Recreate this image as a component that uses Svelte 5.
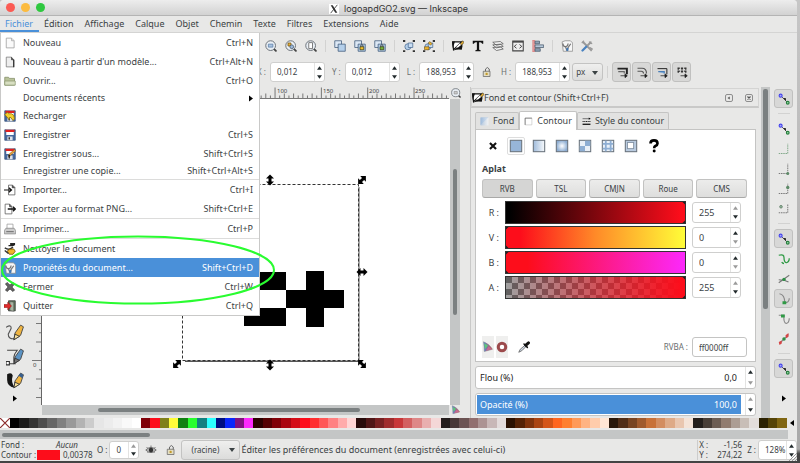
<script>
  const menus = ['Fichier', 'Édition', 'Affichage', 'Calque', 'Objet', 'Chemin', 'Texte', 'Filtres', 'Extensions', 'Aide'];

  const fileMenu = [
    { icon: 'new', label: 'Nouveau', key: 'Ctrl+N' },
    { icon: 'template', label: "Nouveau à partir d'un modèle...", key: 'Ctrl+Alt+N' },
    { icon: 'open', label: 'Ouvrir...', key: 'Ctrl+O' },
    { label: 'Documents récents', sub: true },
    { icon: 'revert', label: 'Recharger' },
    { icon: 'save', label: 'Enregistrer', key: 'Ctrl+S' },
    { icon: 'saveas', label: 'Enregistrer sous...', key: 'Shift+Ctrl+S' },
    { label: 'Enregistrer une copie...', key: 'Shift+Ctrl+Alt+S' },
    { sep: true },
    { icon: 'import', label: 'Importer...', key: 'Ctrl+I' },
    { icon: 'export', label: 'Exporter au format PNG...', key: 'Shift+Ctrl+E' },
    { sep: true },
    { icon: 'print', label: 'Imprimer...', key: 'Ctrl+P' },
    { sep: true },
    { icon: 'clean', label: 'Nettoyer le document' },
    { icon: 'docprops', label: 'Propriétés du document...', key: 'Shift+Ctrl+D', active: true },
    { icon: 'close', label: 'Fermer', key: 'Ctrl+W' },
    { icon: 'quit', label: 'Quitter', key: 'Ctrl+Q' }
  ];

  const commands = ['zoomsel', 'zoomdraw', 'zoompage', '', 'dup', 'clone', 'unclone', '', 'group', 'ungroup', '', 'fill', 'text', 'layers', 'xml', 'align', '', 'docprops', 'prefs'];
  const coords = [
    { l: 'X :', v: '0,012' },
    { l: 'Y :', v: '0,012' },
    { l: 'L :', v: '188,953', lock: true },
    { l: 'H :', v: '188,953' }
  ];
  const affects = ['aff1', 'aff2', 'aff3', 'aff4'];
  const snaps = ['snap*', '', 'snap', 'sbox', 'sedge', 'scorner', 'smid', '', 'snap*', 'spath', 'scross', 'scusp*', 'ssmooth', 'sline', '', 'snap*'];
  const paints = ['none', 'flat*', 'linear', 'radial', 'mesh', 'pattern', 'swatch', 'unknown'];
  const modes = ['RVB', 'TSL', 'CMJN', 'Roue', 'CMS'];
  const channels = [
    { l: 'R :', v: 255, c: 'red' },
    { l: 'V :', v: 0, c: 'green' },
    { l: 'B :', v: 0, c: 'blue' },
    { l: 'A :', v: 255, c: 'alpha' }
  ];
  const palette = ('000 1a1a1a 333 4d4d4d 666 808080 999 b3b3b3 ccc e6e6e6 ececec f2f2f2 f9f9f9 fff ' +
    '800008 fd0d1b 80801a fffd38 118012 29fd2f 138080 2dffff 000e80 0a26fb 801180 fc28fc ' +
    '2b0000 550003 800008 aa0510 d40c17 fd0d1b ff2f30 ff5757 ff8182 ffabab ffd5d5 ' +
    '280b0b 501617 782122 a02c2d c83739 d35f60 de8787 e9afaf f4d7d7 ' +
    '241c1c 483737 6c5353 916f6f ac9393 c8b7b7 e3dbdb ' +
    '2b1102 552206 80330c aa4412 d45519 ff6620 ff7f2f ff9957 ffb382 ffccab ffe6d5 ' +
    '28170b 502d17 784422 a05a2d c87138 d38d60 deaa87 e9c6af f4e3d7 ' +
    '241f1c 483e37 6c5d53 917c6f ac9d93 c8beb7 e3dedb 2b2202 554408 806612').split(' ');

  const hTicks = Array.from({ length: 88 }, (_, i) => ({ x: 43.400 + i * 4.633, n: i }));
  const hLabels = [['100', 275], ['150', 321], ['200', 367], ['250', 413]];
  const vTicks = Array.from({ length: 33 }, (_, i) => ({ y: 360.5 - (i - 4) * 9.25, n: i - 4 }));
  const handles = [[270, 180, 90], [362, 180, -45], [362, 272, 0], [270, 365, 90], [362, 364, 45], [177, 364, -45]];
</script>

{#snippet icon(name)}
  <svg class="ic" viewBox="0 0 16 16" aria-hidden="true">
    {#if name === 'new'}
      <path d="M3 1.5h7l3.500 3.500v9.500H3z" fill="#fafafa" stroke="#999" /><path d="M10 1.500v3.500h3.500" fill="#ddd" stroke="#aaa" />
    {:else if name === 'template'}
      <path d="M3 1.500h7l3 3.500v9.500H3z" fill="#eee" stroke="#777" /><path d="M10 1.500v3.500h3" fill="#444" stroke="#444" /><path d="M13 5v10" stroke="#222" stroke-width="1.500" />
    {:else if name === 'open'}
      <path d="M1 3h5l1 1.500h7v9H1z" fill="#b9c39a" stroke="#7f8a63" /><path d="M1 8h14v5.500H1z" fill="#d8dfc2" stroke="#8e9974" />
    {:else if name === 'save' || name === 'saveas' || name === 'revert'}
      <path d="M1 1h14v14H1z" fill="#47699f" stroke="#36507c" /><path d="M3 1h10v7H3z" fill="#fff" /><path d="M2 1h12v3H2z" fill="#e02020" /><path d="M4.500 10h7v5h-7z" fill="#dde2ea" /><path d="M6 11h2v3H6z" fill="#333" />
      {#if name === 'saveas'}<path d="M6 11l1-3 7-6 1.500 2-7 6z" fill="#e6a33e" stroke="#7a4d12" stroke-width=".7" /><path d="M6 11l2-1" stroke="#111" stroke-width="2" />{/if}
      {#if name === 'revert'}<path d="M1 6l4-3 1 2h4q4 1 4 7l-2 2-3-4H7v3z" fill="#f2cf2e" stroke="#8c6d08" />{/if}
    {:else if name === 'import'}
      <path d="M6 1.500h5.500l3 3v10H6z" fill="#fff" stroke="#555" /><path d="M11 1.500v3.500h3.500" fill="#333" stroke="#444" /><path d="M0 8h9M6.500 5l3.500 3-3.500 3" fill="none" stroke="#111" stroke-width="1.600" />
    {:else if name === 'export'}
      <path d="M1.500 1.500h6l3 3v10h-9z" fill="#fff" stroke="#555" /><path d="M7.500 1.500v3.500h3" fill="#555" stroke="#444" /><path d="M5 8h9M12 5l3 3-3 3" fill="none" stroke="#111" stroke-width="1.800" />
    {:else if name === 'print'}
      <path d="M4 1.500h8V8H4z" fill="#fff" stroke="#999" /><path d="M2.500 7h11l2 3v4.500h-15V10z" fill="#ccc" stroke="#888" /><path d="M3 11.500h10" stroke="#777" stroke-width="1.500" />
    {:else if name === 'clean'}
      <path d="M9 0h5v2h-5zM6 3.500h5l3-1" fill="#333" stroke="#222" stroke-width="1.500" /><path d="M1 6.500q5 3 8 1l3-2" fill="none" stroke="#333" stroke-width="2" /><path d="M4 11q3-4 9-3l2 3-3 4H7z" fill="#f0b429" stroke="#6b4a04" /><path d="M1 10l5 4" stroke="#333" stroke-width="2" />
    {:else if name === 'docprops'}
      <path d="M1.500 2.500l4-1.500h7l3 3v11H3z" fill="#f7f7f7" stroke="#888" /><path d="M2.500 4.500q0 4 3.500 4.500l2 5.500M9.500 4.500q0 3-3 4.500M13 5l-3.500 5-1 4" fill="none" stroke="#777" stroke-width="1.700" /><path d="M8.500 10.500v4" stroke="#3d78b8" stroke-width="2.500" />
    {:else if name === 'close'}
      <path d="M2 4l2-2 4 3.500L12 2l2 2-3.500 4 3.500 4-2 2-4-3.500L4 14l-2-2 3.500-4z" fill="#666" stroke="#333" />
    {:else if name === 'quit'}
      <path d="M6 1h9v13.500H6z" fill="#617c5f" stroke="#333" /><path d="M8 2l5 1v12l-5-1z" fill="#a8b5a3" stroke="#444" stroke-width=".6" /><path d="M0 6h5V3l5 5-5 5v-3H0z" fill="#e02a2a" stroke="#8d0b0b" stroke-width=".7" />
    {:else if name === 'zoomsel' || name === 'zoomdraw' || name === 'zoompage' || name === 'zoom'}
      <path d="M11.500 11.500l3 3" stroke="#444" stroke-width="2.500" stroke-linecap="round" /><circle cx="7.500" cy="7.500" r="6.500" fill="#e9eff5" stroke="#6b7178" stroke-width="1.300" />
      {#if name === 'zoomsel'}<path d="M4.500 5.500h6v4h-6z" fill="#a9c3e0" stroke="#5b7ea8" />{/if}
      {#if name === 'zoomdraw'}<path d="M4 4h4v4H4z" fill="#e8b33c" stroke="#735413" /><circle cx="9" cy="9" r="2.500" fill="#9bb8dc" stroke="#456" />{/if}
      {#if name === 'zoompage'}<path d="M5 3.500h5v8H5z" fill="#fff" stroke="#555" />{/if}
      {#if name === 'zoom'}<path d="M5 5.500h5v4H5z" fill="#ccc" stroke="#888" />{/if}
    {:else if name === 'dup' || name === 'clone' || name === 'unclone'}
      <path d="M1 1h9v9H1z" fill="#dce8f5" stroke="#3d5878" /><path d="M5.500 5.500h9.500V15H5.500z" fill="#b4cfea" stroke="#3d5878" />
      {#if name !== 'dup'}<path d="M8 9h5v4H8z" fill={name === 'clone' ? '#f2c02f' : '#75b53c'} stroke="#3b3b10" /><path d="M9 9V7q1.500-1.500 3 0v2" fill="none" stroke="#333" />{/if}
    {:else if name === 'group' || name === 'ungroup'}
      <circle cx="6.500" cy="9" r="4" fill="#b4cfea" stroke="#4b6b92" /><path d="M7 4h6v6H7z" fill="#c9ddf2" stroke="#4b6b92" />
      <path d="M0 0h3v2.500H0zM13 0h3v2.500h-3zM0 13.500h3V16H0zM13 13.500h3V16h-3z" fill="#333" />
      {#if name === 'ungroup'}<path d="M2 9h6v4H2zM9 2l3 3-2 2-3-3z" fill="#eeb52e" stroke="#5f4308" stroke-width=".7" />{/if}
    {:else if name === 'fill'}
      <path d="M1 2.500h12L2 13z" fill="#fff" stroke="#111" stroke-width="1.600" /><path d="M0 2h4L1 11z" fill="#111" /><path d="M14 8l-1 5q-6-1-11 1l7-6 4-3z" fill="#111" /><path d="M5 10l6-6 2 2-5 4z" fill="#fff" /><path d="M11 5l3-4 2 2-3 4z" fill="#e8b132" stroke="#222" stroke-width=".8" />
    {:else if name === 'text'}
      <path d="M1 1h14v4h-1.500Q13 3 11 3H9.500v9.500q0 1 2 1.200V15h-7v-1.300q2-.2 2-1.200V3H5Q3 3 2.500 5H1z" fill="#111" />
    {:else if name === 'layers'}
      <path d="M1 10l10-1 4 3-9 2zM1 6.500l10-1 4 3-9 2zM1 3l10-1 4 3-9 2z" fill="#f4f4f4" stroke="#555" />
    {:else if name === 'xml'}
      <path d="M1 1.500h14v13H1z" fill="#eee" stroke="#444" stroke-width="1.400" /><path d="M1 2.500h14" stroke="#444" stroke-width="2" /><path d="M6 6L3 8.500 6 11M10 6l3 2.500L10 11" fill="none" stroke="#333" stroke-width="1.200" />
    {:else if name === 'align'}
      <path d="M1 0h2.500v16H1z" fill="#e7a1a1" stroke="#c55" stroke-width=".6" /><path d="M4 1.500h6v3.500H4zM4 11.500h7v3.500H4z" fill="#8fa2b5" stroke="#48596b" /><path d="M4 6.500h11.500v3.500H4z" fill="#b6c7d8" stroke="#48596b" />
    {:else if name === 'prefs'}
      <path d="M3 3l10 10M13 3L9 7" stroke="#999" stroke-width="2.500" stroke-linecap="round" /><path d="M7 9l-5 5" stroke="#4a83c0" stroke-width="3" stroke-linecap="round" /><path d="M1 4l3-3M12 10l3 2-2 3M11 2l1 2 3 1" fill="none" stroke="#999" stroke-width="1.500" />
    {:else if name === 'lock'}
      <path d="M3 7h9v7H3z" fill="#e3ddc2" stroke="#666" /><path d="M6 7V4q2.500-4 5 0v3" fill="none" stroke="#666" stroke-width="1.300" /><circle cx="7.500" cy="10.500" r="1.600" fill="#c39b2c" />
    {:else if name === 'eye'}
      <path d="M1 8q7-7 14 0-7 7-14 0z" fill="#bbb" stroke="#555" /><circle cx="8" cy="8" r="3" fill="#333" /><path d="M2 4l2 2M8 2v2M14 4l-2 2M3 12l1-1M13 12l-1-1" stroke="#555" />
    {:else if name.startsWith('aff')}
      {#if name === 'aff4'}
        <path d="M2 3h13M2 7h13M3 2v7M8 2v7M13 2v7" stroke="#333" stroke-width="1.800" stroke-dasharray="3 1.500" />
      {:else if name === 'aff2'}
        <path d="M2 3h6q6 0 6 7M2 7h5q3 0 3 3" fill="none" stroke="#555" stroke-width="1.500" />
      {:else}
        <path d="M2 3.500h12.500V11" fill="none" stroke="#222" stroke-width={name === 'aff1' ? 2.600 : 1.300} /><path d="M3 7.500h8V10" fill={name === 'aff3' ? '#8ab4e0' : 'none'} stroke={name === 'aff3' ? '#4a7fb8' : '#666'} stroke-width="1.500" />
      {/if}
      <path d="M6 13h7M12 10.500l3 2.500-3 2.500z" stroke="#222" fill="#222" />
    {:else if name === 'snap'}
      <path d="M4 4l8.500 8.500" stroke="#333" stroke-width="1" /><circle cx="3.500" cy="3.500" r="2" fill="#a8a8f8" stroke="#4444ee" stroke-width="1.500" /><circle cx="13" cy="13" r="1.800" fill="#9fd6ad" stroke="#25803c" stroke-width="1.500" /><path d="M7 6.500l3.500.5v3.500z" fill="#111" />
    {:else if name === 'sbox' || name === 'sedge' || name === 'scorner'}
      <path d="M1 14h12V1" fill="none" stroke={name === 'sbox' ? '#7fa888' : '#777'} stroke-width="1.300" stroke-dasharray="2 1" />
      {#if name === 'sedge'}<circle cx="13" cy="14" r="2" fill="#5d8a68" />{/if}
      {#if name === 'scorner'}<circle cx="13" cy="6" r="2.200" fill="#5d8a68" />{/if}
    {:else if name === 'smid'}
      <circle cx="4" cy="5" r="1.800" fill="#8fb599" stroke="#5d7a64" /><path d="M13 2v11H1" fill="none" stroke="#777" stroke-width="1.300" stroke-dasharray="2 1" />
    {:else if name === 'spath'}
      <path d="M1 3q7-2 7 3 0 6 3 7 4-1 4-6M8 14q-2 0-3-2" fill="none" stroke="#2f9a45" stroke-width="1.700" />
    {:else if name === 'scross'}
      <path d="M1 13L15 3M1 9q8 0 13 3" fill="none" stroke="#777" stroke-width="1.400" /><circle cx="8" cy="8.500" r="2.300" fill="#2f8f45" />
    {:else if name === 'scusp'}
      <path d="M2 1q7 1 7 12M9 13q6 0 6-6" fill="none" stroke="#888" stroke-width="1.500" /><path d="M6 11h5v4H6z" fill="#2f9a45" />
    {:else if name === 'ssmooth'}
      <path d="M1 3h7q-1 10 3 11 4-1 4-7" fill="none" stroke="#888" stroke-width="1.500" /><path d="M4 2h5v4H4z" fill="#2f9a45" />
    {:else if name === 'sline'}
      <path d="M2 14L14 2" stroke="#888" stroke-width="1.500" /><path d="M1 12l4-2v4l-3 2zM10 3l4-3v5l-3 2z" fill="#d64545" /><circle cx="8" cy="8" r="2.300" fill="#2f8f45" />
    {:else if name === 'none'}
      <path d="M4.500 4.500l7 7M11.500 4.500l-7 7" stroke="#111" stroke-width="2.400" />
    {:else if name === 'unknown'}
      <path d="M4 5q0-3.500 4-3.500T12 5q0 2-2.500 3Q8.200 8.600 8.200 10.500" fill="none" stroke="#000" stroke-width="3" /><circle cx="8.200" cy="13.800" r="1.700" />
    {:else if name === 'flat' || name === 'linear' || name === 'radial' || name === 'mesh' || name === 'pattern' || name === 'swatch'}
      <rect x="1.500" y="1.500" width="13" height="13" fill={{ flat: '#97b5d8', linear: 'url(#lin)', radial: 'url(#rad)', mesh: '#e9f0f8', pattern: '#e9f0f8', swatch: '#b9cbe0' }[name]} stroke="#69737d" stroke-width="1.200" />
      {#if name === 'mesh'}<path d="M8 2h6v6H8zM2 8h6v6H2z" fill="#8eaed3" />{/if}
      {#if name === 'pattern'}<path d="M2 5.500h12M2 11h12M5.500 2v12M11 2v12" stroke="#8eaed3" stroke-width="2" />{/if}
      {#if name === 'swatch'}<rect x="4" y="4" width="7" height="7" fill="#fff" stroke="#8392a3" />{/if}
    {:else if name === 'tabfill'}
      <path d="M1 1h14L1 14z" fill="#9fbbdb" /><path d="M1 1h14v14H1z" fill="url(#lin)" opacity=".7" />
    {:else if name === 'tabstroke'}
      <path d="M2 2h12v12H2z" fill="#fff" stroke="#bbb" /><path d="M2 14V2h12" fill="none" stroke="#444" />
    {:else if name === 'tabstyle'}
      <path d="M1 3h14" stroke="#222" stroke-width="1" /><path d="M1 8h14" stroke="#222" stroke-width="2" stroke-dasharray="2 1" /><path d="M1 13h14" stroke="#222" stroke-width="2.500" /><path d="M12 1l3 2-3 2z" />
    {:else if name === 'managed'}
      <path d="M2 1q1 7 1 13l11-3Q10 4 2 1z" fill="url(#tri)" stroke="#888" stroke-width=".7" /><path d="M3 3l5 3-4 5z" fill="#5fc97a" /><path d="M9 7l4 4-8 2z" fill="#c66a8d" />
    {:else if name === 'gamut'}
      <circle cx="8" cy="8" r="5" fill="#fff" stroke="#9c4a4c" stroke-width="4" />
    {:else if name === 'picker'}
      <path d="M1 15l2-4 6-5 1.500 1.500L5 13z" fill="#cfdae5" stroke="#555" /><path d="M8 4l4.500 4.500" stroke="#111" stroke-width="2" stroke-linecap="round" /><path d="M10.500 5.500L14 2.500" stroke="#111" stroke-width="4" stroke-linecap="round" />
    {:else if name === 'pencil' || name === 'pen' || name === 'calli'}
      {#if name === 'pencil'}<path d="M0 3q5-3 4.500 1L2 9q0 5 6 4" fill="none" stroke="#555" />{/if}
      {#if name === 'pen'}<path d="M1 2h9Q5 8 8 14H2" fill="none" stroke="#444" /><path d="M0 12h3v3H0z" fill="#fff" stroke="#333" />{/if}
      {#if name === 'calli'}<path d="M1 2q4-2 5 1-2 6 2 11-7-1-7-7z" fill="#151515" />{/if}
      <path d="M7 14l1-6 5-7 2.500 1.500L13 10z" fill={name === 'pen' ? '#5b93c4' : '#efb440'} stroke="#444" stroke-width=".8" /><path d="M7 14l1-5 4 2z" fill={name === 'pen' ? '#777' : '#fbe39a'} stroke="#333" stroke-width=".8" />
      {#if name === 'calli'}<path d="M11 3l2-2 2.500 1.500-1 3z" fill="#385f8e" />{/if}
    {/if}
  </svg>
{/snippet}

{#snippet arrows(top, bottom)}
  <span class="arrows" aria-hidden="true">
    <svg viewBox="0 0 6 4" class:off={top}><path d="M0 4L3 0l3 4z" /></svg>
    <svg viewBox="0 0 6 4" class:off={bottom}><path d="M0 0l3 4 3-4z" /></svg>
  </span>
{/snippet}

<svg class="defs" aria-hidden="true">
  <defs>
    <linearGradient id="lin"><stop offset="0" stop-color="#9fbbdb" /><stop offset="1" stop-color="#f8fafc" /></linearGradient>
    <radialGradient id="rad"><stop offset="0" stop-color="#fff" /><stop offset="1" stop-color="#8eaed3" /></radialGradient>
    <linearGradient id="tri"><stop offset="0" stop-color="#4f86d9" /><stop offset="1" stop-color="#d34d4d" /></linearGradient>
  </defs>
</svg>

<div class="desktop">
  <div class="window">
    <header class="title">
      <div class="lights"><button aria-label="Fermer"></button><button aria-label="Réduire"></button><button aria-label="Agrandir"></button></div>
      <h1><svg class="x11" viewBox="0 0 12 12" aria-hidden="true"><path d="M0 0h12v12H0z" fill="#fff" /><path d="M2 1.500h2.500l5.500 9H7.500z" fill="#333" /><path d="M10 1L2 11" stroke="#333" /></svg>logoapdGO2.svg — Inkscape</h1>
    </header>

    <nav class="menubar">
      {#each menus as m, i}<button class:open={i === 0}>{m}</button>{/each}
    </nav>

    <div class="commands">
      {#each commands as c}
        {#if c}<button aria-label={c}>{@render icon(c)}</button>{:else}<i></i>{/if}
      {/each}
    </div>

    <div class="controls">
      {#each coords as c}
        <label><span>{c.l}</span><span class="spin"><input value={c.v} />{@render arrows(false, false)}</span></label>
        {#if c.lock}<button class="lock" aria-label="Verrouiller">{@render icon('lock')}</button>{/if}
      {/each}
      <span class="combo unit"><select aria-label="Unité"><option>px</option></select></span>
      <i></i>
      {#each affects as a}<button class="toggle" aria-label={a}>{@render icon(a)}</button>{/each}
    </div>

    <main>
      <aside class="toolbox">
        <button aria-label="Crayon">{@render icon('pencil')}</button>
        <button aria-label="Bézier">{@render icon('pen')}</button>
        <button aria-label="Calligraphie">{@render icon('calli')}</button>
        <svg class="more" viewBox="0 0 4 6"><path d="M0 0l4 3-4 3z" /></svg>
      </aside>

      <section class="work">
        <div class="rulerrow">
          <svg class="hruler">
            <g transform="translate(-32,-87)">
              {#each hTicks as t}<path d={`M${t.x} 98.500v${(t.n % 10 === 0) ? -11 : t.n % 2 ? -3 : -5}`} stroke="#777" />{/each}
              {#each hLabels as l}<text x={l[1] + 2} y="93">{l[0]}</text>{/each}
            </g>
          </svg>
          <span class="corner">{@render icon('zoom')}</span>
        </div>
        <div class="viewrow">
          <svg class="vruler">
            <g transform="translate(-32,-99)">
              {#each vTicks as t}<path d={`M42 ${t.y}h${t.n === 0 ? -10 : t.n % 2 ? -3 : -6}`} stroke="#777" />{/each}
              <text x="33" y="367">0</text>
              <path d="M41.500 99v306" stroke="#666" />
            </g>
          </svg>
          <svg class="canvas">
            <g transform="translate(-42,-99)">
              <path d="M358.500 187v174H185" fill="none" stroke="#555" stroke-width="2" />
              <rect x="182.500" y="184.500" width="176" height="176" fill="#fff" stroke="#333" stroke-dasharray="3 2" />
              <path d="M244 272h42v18h20v-19h18v19h20v18h-20v19h-18v-19h-20v18h-42v-18h42v-18h-42z" />
              {#each handles as h}
                <path d="M-5.500 0l4-4v2.500h3V-4l4 4-4 4V1.500h-3V4z" transform={`translate(${h[0]} ${h[1]}) rotate(${h[2]})`} />
              {/each}
            </g>
          </svg>
          <div class="vscroll"><b></b></div>
        </div>
        <div class="hrow"><div class="hscroll"><b></b></div><span class="corner">{@render icon('managed')}</span></div>
      </section>

      <section class="dock">
        <h2>{@render icon('fill')}<span>Fond et contour (Shift+Ctrl+F)</span><button aria-label="Iconifier"><svg viewBox="0 0 8 8"><path d="M5 2v4L2 4z" fill="#555" /></svg></button><button aria-label="Fermer le panneau"><svg viewBox="0 0 8 8"><path d="M2 2l4 4M6 2L2 6" stroke="#555" stroke-width="1.500" /></svg></button></h2>
        <div class="tabs" role="tablist">
          <button role="tab" aria-selected="false">{@render icon('tabfill')}Fond</button>
          <button role="tab" aria-selected="true" class="on">{@render icon('tabstroke')}Contour</button>
          <button role="tab" aria-selected="false">{@render icon('tabstyle')}Style du contour</button>
        </div>
        <div class="page">
          <div class="paints">
            {#each paints as p}<button aria-label={p.replace('*', '')} class:on={p.endsWith('*')}>{@render icon(p.replace('*', ''))}</button>{/each}
          </div>
          <h3>Aplat</h3>
          <div class="modes">{#each modes as m, i}<button class:on={i === 0}>{m}</button>{/each}</div>
          <div class="channels">
            {#each channels as c}
              <div class="channel">
                <label for={c.c}>{c.l}</label>
                <span class={'track ' + c.c} class:max={c.v === 255}><input id={c.c} type="range" min="0" max="255" value={c.v} /></span>
                <span class="spin"><input value={c.v} aria-label={c.l} />{@render arrows(c.v === 255, c.v === 0)}</span>
              </div>
            {/each}
          </div>
          <div class="rgba">
            <button class="shade" aria-label="Gestion des couleurs">{@render icon('managed')}</button>
            <button class="shade" aria-label="Hors gamut">{@render icon('gamut')}</button>
            <button class="pick" aria-label="Pipette">{@render icon('picker')}</button>
            <label>RVBA : <input value="ff0000ff" /></label>
          </div>
        </div>
        <label class="amount"><span>Flou (%)</span><input value="0,0" />{@render arrows(false, true)}</label>
        <label class="amount full"><span>Opacité (%)</span><input value="100,0" />{@render arrows(true, false)}</label>
      </section>
      <div class="dockscroll"><b></b></div>

      <aside class="snapbar">
        {#each snaps as s}
          {#if s}<button aria-label={s.replace('*', '')} class:on={s.endsWith('*')}>{@render icon(s.replace('*', ''))}</button>{:else}<i></i>{/if}
        {/each}
        <svg class="more" viewBox="0 0 4 6"><path d="M0 0l4 3-4 3z" /></svg>
      </aside>
    </main>

    <div class="palette">
      <svg class="nocolor" viewBox="0 0 10 10" aria-hidden="true"><path d="M0 0h10v10H0z" fill="#fff" /><path d="M0 0l10 10M10 0L0 10" stroke="#8c2c2c" stroke-width="1.200" /></svg>
      <div class="swatches">{#each palette as p}<span style:background={'#' + p}></span>{/each}</div>
      <svg class="back" viewBox="0 0 4 6"><path d="M4 0L0 3l4 3z" /></svg>
    </div>
    <div class="palscroll"><b></b></div>

    <footer>
      <div class="style">
        <span>Fond :</span><em>Aucun</em>
        <span>Contour :</span><span class="stroke"><b></b>0,00378</span>
      </div>
      <label class="op">O : <span class="spin"><input value="0" />{@render arrows(true, false)}</span></label>
      <button aria-label="Visibilité">{@render icon('eye')}</button>
      <button aria-label="Verrou">{@render icon('lock')}</button>
      <span class="combo layer"><select aria-label="Calque"><option>(racine)</option></select></span>
      <p>Éditer les préférences du document (enregistrées avec celui-ci)</p>
      <dl><dt>X :</dt><dd>-1,56</dd><dt>Y :</dt><dd>274,22</dd></dl>
      <label class="zoomf">Z : <span class="spin"><input value="128%" />{@render arrows(false, false)}</span></label>
      <svg class="grip" viewBox="0 0 8 8"><path d="M0 8l8-8M3 8l5-5M6 8l2-2" stroke="#999" /></svg>
    </footer>
  </div>

  <div class="filemenu" role="menu">
    {#each fileMenu as f}
      {#if f.sep}<hr />{:else}
        <button role="menuitem" class:active={f.active} class:plain={!f.icon}>
          <span class="slot">{#if f.icon}{@render icon(f.icon)}{/if}</span>
          <span class="name">{f.label}</span>
          {#if f.sub}<svg class="more" viewBox="0 0 4 6"><path d="M0 0l4 3-4 3z" /></svg>{:else}<span>{f.key ?? ''}</span>{/if}
        </button>
      {/if}
    {/each}
  </div>
  <svg class="ring" viewBox="0 0 274 70" aria-hidden="true"><ellipse cx="137" cy="35" rx="136" ry="33.500" fill="none" stroke="#29fc30" stroke-width="2" /></svg>
</div>

<style>
  :global(body) { margin: 0; }
  .desktop { position: relative; box-sizing: border-box; height: 100vh; padding: 0 3px 2px 0; overflow: hidden; background: linear-gradient(#c6c6c6, #a9a9a9 97%, #444 98%); font: 9px/12px "Noto Sans", "Open Sans", sans-serif; color: #3b4244; }
  .window { display: flex; flex-direction: column; height: 100%; background: #e8e8e7; border-radius: 4px 4px 0 0; overflow: hidden; }
  .defs { position: absolute; width: 0; height: 0; }
  button, input, select { font: inherit; color: inherit; margin: 0; padding: 0; border: 0; background: none; border-radius: 0; outline: 0; }
  button { display: flex; align-items: center; justify-content: center; white-space: nowrap; }
  input { min-width: 0; }
  .ic { width: 12px; height: 12px; flex: none; display: block; }
  .more { width: 4px; height: 7px; flex: none; }

  .title { position: relative; display: flex; align-items: center; justify-content: center; height: 15px; flex: none; border-bottom: 1px solid #b4b4b4; background: linear-gradient(#ededed, #d2d2d2); }
  .lights { position: absolute; left: 6px; display: flex; gap: 6px; }
  .lights button { width: 9px; height: 9px; border-radius: 50%; background: #fb5b54; }
  .lights button:nth-child(2) { background: #fcbb3f; }
  .lights button:nth-child(3) { background: #2fc840; }
  h1 { display: flex; align-items: center; gap: 5px; margin: 2px 0 0; font: 9px/14px Inter, Roboto, sans-serif; color: #333; }
  .x11 { width: 10px; height: 10px; }

  .menubar { display: flex; gap: 11px; height: 16px; flex: none; border-bottom: 1px solid #d4d4d3; }
  .menubar button { padding-top: 2px; border-bottom: 2px solid transparent; }
  .menubar .open { margin-right: -6px; padding: 2px 6px 0 5px; color: #4a90d9; border-color: #4a90d9; }

  .commands { display: flex; align-items: center; height: 26px; flex: none; padding-left: 261px; }
  .commands button { width: 20px; height: 20px; }
  i { flex: none; width: 1px; height: 12px; margin: 0 4px; background: #d2d2d1; }

  .controls { display: flex; align-items: center; height: 28px; flex: none; padding: 0 0 2px 257px; font-size: 8px; box-sizing: border-box; }
  .controls label { display: flex; align-items: center; gap: 4px; margin-right: 7px; color: #6a6f70; }
  .spin { display: flex; box-sizing: border-box; height: 20px; background: #fff; border: 1px solid #cfcfce; border-radius: 3px; overflow: hidden; color: #3b4244; }
  .controls .spin { width: 55px; }
  .spin input { flex: 1; width: 0; padding-left: 6px; }
  .arrows { display: flex; flex: none; flex-direction: column; justify-content: space-around; align-items: center; width: 9px; border-left: 1px solid #e3e3e2; }
  .arrows svg { width: 5px; height: 4px; fill: #222a2c; }
  .arrows .off { fill: #9a9a9a; }
  .lock { margin-right: 8px; }
  .combo { position: relative; display: flex; box-sizing: border-box; border: 1px solid #c3c3c2; border-radius: 3px; background: linear-gradient(#efefee, #dcdcdb); }
  .combo::after { content: ""; position: absolute; right: 4px; top: 7px; border: 3px solid transparent; border-top: 4px solid #3b4244; border-bottom: 0; }
  .combo select { appearance: none; width: 100%; }
  .unit { width: 31px; height: 18px; margin-left: -5px; }
  .unit select { padding-left: 3px; }
  .toggle { box-sizing: border-box; width: 19px; height: 20px; margin-right: 1px; border: 1px solid #c0c0bf; border-radius: 3px; background: #d8d8d7; }

  main { display: flex; flex: 1; min-height: 0; }
  .toolbox { display: flex; flex: none; flex-direction: column; justify-content: flex-end; align-items: center; gap: 4px; width: 26px; padding: 0 4px 16px 2px; }
  .toolbox .ic { width: 18px; height: 18px; }
  .toolbox button { height: 20px; }
  .work { display: flex; flex: 1; flex-direction: column; min-width: 0; padding-bottom: 3px; }
  .rulerrow { display: flex; height: 12px; flex: none; }
  .hruler { flex: 1; height: 12px; min-width: 0; border-bottom: 1px solid #777; box-sizing: border-box; }
  text { font-size: 6px; fill: #444; }
  .corner { display: flex; flex: none; align-items: center; justify-content: center; width: 13px; }
  .corner .ic { width: 10px; height: 10px; }
  .viewrow { display: flex; flex: 1; min-height: 0; }
  .vruler { width: 10px; height: 100%; flex: none; }
  .canvas { flex: 1; min-width: 0; height: 100%; background: #fff; }
  .vscroll { flex: none; width: 10px; margin-right: 2px; padding-top: 70px; box-sizing: border-box; background: #c4c6c6; }
  .vscroll b { display: block; width: 4px; height: 146px; margin: 0 auto; border-radius: 2px; background: #7b8081; }
  .hrow { display: flex; height: 10px; flex: none; padding-left: 10px; }
  .hscroll { display: flex; flex: 1; align-items: center; padding-left: 56px; background: #c4c6c6; }
  .hscroll b { width: 262px; height: 4px; border-radius: 2px; background: #7b8081; }

  .dock { display: flex; flex: none; flex-direction: column; width: 291px; margin-left: 8px; box-sizing: border-box; padding: 1px 5px 0 4px; border-left: 1px solid #c9c9c8; overflow: hidden; }
  h2 { display: flex; align-items: center; gap: 10px; height: 20px; flex: none; margin: 0 -3px 3px -4px; padding-right: 5px; box-sizing: border-box; border: 1px solid #d4d4d3; border-bottom: 2px solid #c9c9c8; font: inherit; }
  h2 span { flex: 1; margin-left: -10px; }
  h2 button { width: 8px; height: 8px; border: 1px solid #8e8e8e; border-radius: 2px; margin-left: 2px; }
  h2 svg:not(.ic) { width: 8px; height: 8px; }
  .tabs { display: flex; align-items: flex-end; height: 18px; flex: none; }
  .tabs button { gap: 4px; box-sizing: border-box; height: 17px; padding: 0 4px; border: 1px solid #c4c4c3; border-bottom: 0; background: #e2e2e1; border-radius: 2px 2px 0 0; }
  .tabs .on { position: relative; height: 19px; margin-bottom: -1px; background: #fff; }
  .tabs .ic { width: 9px; height: 9px; }
  .page { display: flex; flex: none; flex-direction: column; box-sizing: border-box; height: 233px; padding: 7px 8px 3px 6px; border: 1px solid #c4c4c3; background: #fff; }
  .paints { display: flex; gap: 5px; margin-left: 2px; }
  .paints button { width: 18px; height: 18px; box-sizing: border-box; border: 1px solid transparent; border-radius: 2px; }
  .paints .on { border-color: #ddd; }
  .paints .ic { width: 14px; height: 14px; flex: none; }
  h3 { margin: 8px 0 4px; font: bold 9px/12px "Noto Sans", sans-serif; }
  .modes { display: flex; gap: 3px; }
  .modes button { flex: 1; width: 0; height: 19px; box-sizing: border-box; border: 1px solid #c2c2c1; border-bottom-color: #a9a9a8; border-radius: 3px; background: linear-gradient(#ececeb, #dededd); font-size: 8px; }
  .modes .on { background: #d5d5d4; }
  .channels { display: flex; flex-direction: column; gap: 2px; margin: 3px 6px 0 0; }
  .channel { display: flex; align-items: center; height: 23px; }
  .channel label { width: 17px; margin-right: 6px; text-align: right; white-space: nowrap; }
  .track { position: relative; flex: 1; display: flex; height: 23px; box-sizing: border-box; border: 1px solid #333; overflow: hidden; }
  .track::before, .track::after { content: ""; position: absolute; left: -3px; width: 5px; height: 5px; background: #222; transform: rotate(45deg); }
  .track::before { top: -3px; }
  .track::after { bottom: -3px; }
  .track.max::before, .track.max::after { left: auto; right: -3px; }
  .track input { appearance: none; width: 100%; opacity: 0; }
  .red { background: linear-gradient(90deg, #000 2%, #fd0d1b 98%); }
  .green { background: linear-gradient(90deg, #fd0d1b 8%, #ff8a28 50%, #fffd38); }
  .blue { background: linear-gradient(90deg, #fd0d1b 12%, #fc28fc); }
  .alpha { background: linear-gradient(90deg, #fd0d1b00, #fd0d1b 98%), repeating-conic-gradient(#a0a0a0 0 25%, #606060 0 50%) 0 0 / 12px 12px; }
  .channel .spin { width: 49px; height: 21px; margin-left: 6px; }
  .rgba { display: flex; align-items: center; margin-top: auto; }
  .shade { width: 12px; height: 22px; margin-right: 2px; background: #efefee; }
  .pick { margin-left: 8px; }
  .rgba label { display: flex; align-items: center; gap: 4px; margin-left: auto; font-size: 8px; color: #6a6f70; }
  .rgba input { box-sizing: border-box; width: 55px; height: 20px; padding-left: 6px; border: 1px solid #c4c4c3; border-radius: 3px; color: #3b4244; }
  .amount { display: flex; flex: none; box-sizing: border-box; height: 23px; margin-top: 4px; border: 1px solid #c4c4c3; border-radius: 3px; background: #fff; color: #222; line-height: 21px; }
  .amount span:first-child { padding-left: 4px; }
  .amount input { flex: 1; width: 0; padding-right: 8px; text-align: right; }
  .amount.full { color: #fff; background: linear-gradient(#4a90d9, #4a90d9) 1px 1px / calc(100% - 15px) calc(100% - 2px) no-repeat #fff; }
  .dockscroll { flex: none; width: 9px; padding-top: 2px; background: #c4c6c6; }
  .dockscroll b { display: block; width: 5px; height: 220px; margin: 0 auto; border-radius: 2px; background: #7b8081; }
  .snapbar { display: flex; flex: none; flex-direction: column; align-items: center; gap: 1px; width: 25px; padding: 2px 1px 0; }
  .snapbar button { flex: none; box-sizing: border-box; width: 19px; height: 19px; border: 1px solid transparent; border-radius: 3px; }
  .snapbar .on { border-color: #c0c0bf; background: #d8d8d7; }
  .snapbar i { width: 12px; height: 1px; margin: 4px 0; }
  .snapbar .more { margin-top: 16px; }

  .palette { display: flex; height: 10px; flex: none; align-items: center; }
  .nocolor { width: 10px; height: 10px; flex: none; }
  .swatches { display: flex; flex: 1; height: 10px; }
  .swatches span { flex: 1; }
  .back { width: 4px; height: 6px; margin: 0 3px; flex: none; }
  .palscroll { display: flex; align-items: center; height: 9px; flex: none; margin: 2px 9px 0 0; padding-left: 2px; background: #c4c6c6; }
  .palscroll b { width: 148px; height: 4px; border-radius: 2px; background: #7b8081; }

  footer { display: flex; align-items: center; height: 22px; flex: none; font-size: 8px; line-height: 10px; white-space: nowrap; }
  .style { display: grid; grid-template-columns: 35px 60px; gap: 0 1px; padding-left: 1px; }
  .style em { text-align: center; }
  .stroke { display: flex; gap: 3px; }
  .stroke b { width: 23px; height: 10px; background: #fd0d1b; }
  .op, .zoomf { display: flex; align-items: center; gap: 2px; }
  .op .spin { width: 30px; height: 18px; margin-right: 2px; }
  footer > button { width: 20px; }
  .layer { width: 59px; height: 20px; }
  .layer select { padding-left: 9px; }
  p { flex: 1; margin: 0 0 0 1px; font-size: 9px; line-height: 12px; }
  dl { display: grid; grid-template-columns: 14px 29px; margin: 0 5px 0 0; border-left: 1px solid #ccc; padding-left: 1px; }
  dd { margin: 0; text-align: right; }
  .zoomf .spin { width: 39px; }
  .grip { width: 8px; height: 8px; margin-left: -8px; align-self: flex-end; }

  .filemenu { position: absolute; left: 0; top: 33px; box-sizing: border-box; width: 260px; border: solid #c9c9c8; border-width: 0 1px 1px; background: #fff; }
  .filemenu button { width: 100%; height: 19px; padding: 0 6px 0 3px; }
  .filemenu .plain { height: 16px; }
  .filemenu .active { background: #4a90d9; color: #fff; }
  .slot { width: 19px; }
  .name { flex: 1; text-align: left; }
  hr { height: 1px; margin: 0; border: 0; background: #dcdcdb; }
  .ring { position: absolute; left: 1px; top: 235px; width: 274px; height: 70px; pointer-events: none; }
</style>
